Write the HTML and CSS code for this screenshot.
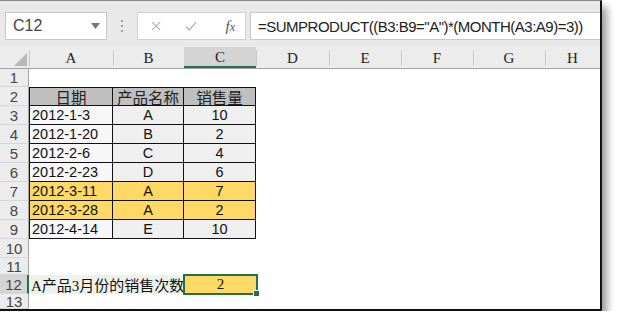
FILE: index.html
```html
<!DOCTYPE html>
<html lang="zh-CN">
<head>
  <meta charset="UTF-8" />
  <title>SUMPRODUCT 示例</title>
  <link rel="stylesheet" href="styles.css">
</head>
<body>
  <div class="window">
    <!-- 名称框 + 编辑栏 -->
    <div class="toolbar">
      <div class="namebox">
        <span>C12</span>
        <svg class="arrow" width="9" height="6" viewBox="0 0 9 6"><path d="M0 0h9L4.5 6z" fill="#777"/></svg>
      </div>
      <div class="grip"><i></i><i></i><i></i></div>
      <div class="fxbox">
        <svg width="12" height="12" viewBox="0 0 12 12"><path d="M1.5 1.5l9 9M10.5 1.5l-9 9" stroke="#b3b3b3" stroke-width="1.4" fill="none"/></svg>
        <svg width="14" height="12" viewBox="0 0 14 12"><path d="M1 6.5l4 4 8-9" stroke="#b3b3b3" stroke-width="1.6" fill="none"/></svg>
        <span class="fx">f<small>x</small></span>
      </div>
      <div class="formula">=SUMPRODUCT((B3:B9="A")*(MONTH(A3:A9)=3))</div>
    </div>

    <!-- 工作表 -->
    <div class="sheet">
      <div class="colhead">
        <div class="corner">
          <svg width="13" height="13" viewBox="0 0 13 13"><path d="M13 0v13H0z" fill="#b8b8b8"/></svg>
        </div>
        <div class="ch w-a">A</div>
        <div class="ch w-b">B</div>
        <div class="ch w-c active">C</div>
        <div class="ch w-d">D</div>
        <div class="ch w-e">E</div>
        <div class="ch w-e">F</div>
        <div class="ch w-e">G</div>
        <div class="ch last">H</div>
      </div>

      <div class="row r-18"><div class="rh">1</div></div>

      <div class="row">
        <div class="rh">2</div>
        <div class="cell w-a first top head">日期</div>
        <div class="cell w-b top head">产品名称</div>
        <div class="cell w-c top head">销售量</div>
      </div>
      <div class="row">
        <div class="rh">3</div>
        <div class="cell w-a first date">2012-1-3</div>
        <div class="cell w-b grey">A</div>
        <div class="cell w-c grey">10</div>
      </div>
      <div class="row">
        <div class="rh">4</div>
        <div class="cell w-a first date">2012-1-20</div>
        <div class="cell w-b grey">B</div>
        <div class="cell w-c grey">2</div>
      </div>
      <div class="row">
        <div class="rh">5</div>
        <div class="cell w-a first date">2012-2-6</div>
        <div class="cell w-b grey">C</div>
        <div class="cell w-c grey">4</div>
      </div>
      <div class="row">
        <div class="rh">6</div>
        <div class="cell w-a first date">2012-2-23</div>
        <div class="cell w-b grey">D</div>
        <div class="cell w-c grey">6</div>
      </div>
      <div class="row">
        <div class="rh">7</div>
        <div class="cell w-a first date gold">2012-3-11</div>
        <div class="cell w-b gold">A</div>
        <div class="cell w-c gold">7</div>
      </div>
      <div class="row">
        <div class="rh">8</div>
        <div class="cell w-a first date gold">2012-3-28</div>
        <div class="cell w-b gold">A</div>
        <div class="cell w-c gold">2</div>
      </div>
      <div class="row">
        <div class="rh">9</div>
        <div class="cell w-a first date">2012-4-14</div>
        <div class="cell w-b grey">E</div>
        <div class="cell w-c grey">10</div>
      </div>

      <div class="row"><div class="rh">10</div></div>
      <div class="row r-17"><div class="rh">11</div></div>

      <div class="row">
        <div class="rh sel">12</div>
        <div class="label">A产品3月份的销售次数</div>
        <div class="result">2</div>
      </div>

      <div class="row r-15"><div class="rh">13</div></div>
    </div>
  </div>
</body>
</html>
```

FILE: styles.css
```css
body {
  margin: 0;
  background: #fff;
  font-family: "Liberation Sans", Arial, sans-serif;
}
.window {
  width: 600px;
  height: 308px;
  background: #fff;
  border-top: 1px solid #8a8a8a;
  border-right: 2px solid #111;
  border-bottom: 2px solid #111;
  box-shadow: 5px 7px 8px rgba(0,0,0,0.4);
  overflow: hidden;
  box-sizing: content-box;
}

/* toolbar */
.toolbar {
  height: 46px;
  background: #e9e9e9;
  display: flex;
  align-items: flex-start;
  padding: 11px 0 0 5px;
  box-sizing: border-box;
}
.namebox {
  flex: none;
  width: 102px;
  height: 28px;
  background: #fff;
  border: 1px solid #c8c8c8;
  box-sizing: border-box;
  display: flex;
  align-items: center;
  justify-content: space-between;
  padding: 0 6px 0 7px;
  font-size: 16px;
  color: #444;
}
.grip {
  flex: none;
  width: 30px;
  height: 28px;
  display: flex;
  flex-direction: column;
  align-items: center;
  justify-content: center;
  gap: 3px;
}
.grip i {
  width: 2px;
  height: 2px;
  background: #a0a0a0;
}
.fxbox {
  flex: none;
  width: 109px;
  height: 28px;
  background: #fff;
  border: 1px solid #d0d0d0;
  box-sizing: border-box;
  display: flex;
  align-items: center;
  padding: 0 10px 0 13px;
  gap: 24px;
}
.fx {
  font-family: "Liberation Serif", serif;
  font-style: italic;
  font-size: 15px;
  color: #555;
  margin-left: 4px;
}
.fx small {
  font-size: 12px;
}
.formula {
  flex: 1;
  min-width: 0;
  overflow: hidden;
  margin-left: 4px;
  height: 28px;
  background: #fff;
  border: 1px solid #c8c8c8;
  border-right: none;
  box-sizing: border-box;
  display: flex;
  align-items: center;
  padding-left: 7px;
  font-size: 15px;
  letter-spacing: -0.5px;
  color: #222;
  white-space: nowrap;
}

/* sheet */
.colhead {
  display: flex;
  height: 22px;
  background: #ececec;
  border-bottom: 1px solid #a3a3a3;
  box-sizing: border-box;
  font-family: "Liberation Serif", serif;
  font-size: 15px;
  color: #222;
}
.corner {
  width: 29px;
  display: flex;
  align-items: flex-end;
  justify-content: flex-end;
  padding: 0 2px 2px 0;
  box-sizing: border-box;
}
.ch {
  display: flex;
  align-items: center;
  justify-content: center;
  background: linear-gradient(#c8c8c8, #c8c8c8) left 3px / 1px 16px no-repeat;
  box-sizing: border-box;
  padding-top: 2px;
}
.ch.active {
  background: #d4d4d4;
  border-bottom: 2px solid #217346;
}
.ch.last {
  flex: 1;
}
.w-a { width: 84px; }
.w-b { width: 71px; }
.w-c { width: 72px; }
.w-d { width: 73px; }
.w-e { width: 72px; }

.row {
  display: flex;
  height: 19px;
}
.r-18 { height: 18px; }
.r-17 { height: 17px; }
.r-15 { height: 15px; }
.rh {
  width: 29px;
  background: #ececec;
  border-right: 1px solid #a3a3a3;
  border-bottom: 1px solid #d6d6d6;
  box-sizing: border-box;
  display: flex;
  align-items: center;
  justify-content: center;
  font-size: 15px;
  color: #444;
}
.rh.sel {
  background: #d4d4d4;
  border-right: 2px solid #217346;
}

.cell {
  box-sizing: border-box;
  border-right: 1px solid #111;
  border-bottom: 1px solid #111;
  display: flex;
  align-items: center;
  justify-content: center;
  font-size: 14.5px;
  color: #111;
}
.cell.first { border-left: 1px solid #111; }
.cell.top { border-top: 1px solid #111; }
.cell.head {
  background: #bfbfbf;
  font-family: "Noto Sans CJK SC", sans-serif;
  font-size: 15.5px;
  color: #222;
}
.cell.date {
  justify-content: flex-start;
  padding-left: 2px;
  background: #f7f7f7;
}
.cell.grey { background: #efefef; }
.cell.gold { background: #ffd966; }

.label {
  width: 155px;
  background: #eef2ec;
  display: flex;
  align-items: center;
  padding-left: 2px;
  box-sizing: border-box;
  white-space: nowrap;
  font-family: "Liberation Serif", "Noto Sans CJK SC", serif;
  font-size: 15px;
  color: #111;
}
.result {
  position: relative;
  width: 75px;
  height: 21px;
  margin: -1px 0 0 -1px;
  background: #ffd966;
  border: 2px solid #217346;
  box-sizing: border-box;
  display: flex;
  align-items: center;
  justify-content: center;
  font-family: "Liberation Serif", serif;
  font-size: 15px;
  color: #111;
}
.result::after {
  content: "";
  position: absolute;
  right: -4px;
  bottom: -4px;
  width: 5px;
  height: 5px;
  background: #217346;
  border: 1px solid #fff;
}
```
